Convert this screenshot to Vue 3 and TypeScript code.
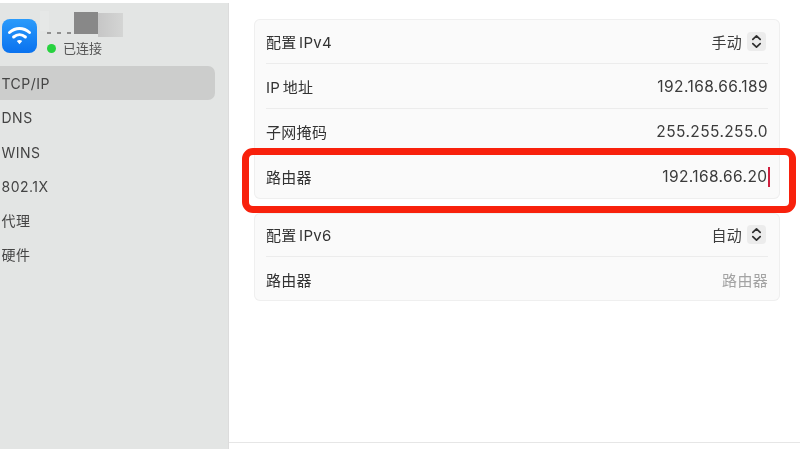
<template>
  <div class="window">
    <aside class="side">
      <div class="net">
        <div class="net__icon">
          <svg width="35" height="35" viewBox="0 0 35 35" fill="none">
            <path d="M7.5 13.5c6-5.4 14-5.4 20 0" stroke="#fff" stroke-width="3" stroke-linecap="round" />
            <path d="M11.6 18c3.6-3 8.2-3 11.8 0" stroke="#fff" stroke-width="3" stroke-linecap="round" />
            <path d="M14.8 22l2.7 3.2 2.7-3.2c-1.6-1.2-3.8-1.2-5.4 0z" fill="#fff" />
          </svg>
        </div>
        <div class="net__text">
          <div class="net__name">
            <i class="mask mask--pale"></i>
            <i class="mask mask--dots"></i>
            <i class="mask mask--dark"></i>
            <i class="mask mask--light"></i>
          </div>
          <div class="net__status"><i class="dot"></i>已连接</div>
        </div>
      </div>
      <nav class="nav">
        <div v-for="item in navItems" :key="item" class="nav__item" :class="{ 'nav__item--on': item === 'TCP/IP' }">
          {{ item }}
        </div>
      </nav>
    </aside>
    <main class="main">
      <section class="card">
        <div v-for="row in rows" :key="row.label" class="row">
          <span class="row__label">{{ row.label }}</span>
          <span class="row__val" :class="{ 'row__val--ip': !row.select }">
            {{ row.value }}
            <i v-if="row.caret" class="caret"></i>
            <span v-if="row.select" class="stepper">
              <svg width="11" height="15" viewBox="0 0 11 15" fill="none" stroke="#2e2e2e" stroke-width="1.7" stroke-linecap="round" stroke-linejoin="round">
                <path d="M1.8 5.4L5.5 1.8l3.7 3.6" />
                <path d="M1.8 9.6l3.7 3.6 3.7-3.6" />
              </svg>
            </span>
          </span>
        </div>
      </section>
      <section class="card card--second">
        <div v-for="row in rows2" :key="row.label" class="row">
          <span class="row__label">{{ row.label }}</span>
          <span class="row__val" :class="{ 'row__val--hint': row.hint }">
            {{ row.value }}
            <span v-if="row.select" class="stepper">
              <svg width="11" height="15" viewBox="0 0 11 15" fill="none" stroke="#2e2e2e" stroke-width="1.7" stroke-linecap="round" stroke-linejoin="round">
                <path d="M1.8 5.4L5.5 1.8l3.7 3.6" />
                <path d="M1.8 9.6l3.7 3.6 3.7-3.6" />
              </svg>
            </span>
          </span>
        </div>
      </section>
      <div class="highlight"></div>
      <div class="foot"></div>
    </main>
  </div>
</template>

<script setup lang="ts">
interface Row {
  label: string
  value: string
  select?: boolean
  caret?: boolean
  hint?: boolean
}

const navItems = ['TCP/IP', 'DNS', 'WINS', '802.1X', '代理', '硬件']

const rows: Row[] = [
  { label: '配置 IPv4', value: '手动', select: true },
  { label: 'IP 地址', value: '192.168.66.189' },
  { label: '子网掩码', value: '255.255.255.0' },
  { label: '路由器', value: '192.168.66.20', caret: true },
]

const rows2: Row[] = [
  { label: '配置 IPv6', value: '自动', select: true },
  { label: '路由器', value: '路由器', hint: true },
]
</script>

<style>
html,
body {
  margin: 0;
  background: #fff;
}
</style>

<style scoped>
.window {
  display: flex;
  width: 800px;
  height: 449px;
  overflow: hidden;
  font-family: Inter, "Noto Sans CJK SC", sans-serif;
  color: #3a3a3a;
  background: #fff;
  filter: blur(0.35px);
}
.side {
  box-sizing: border-box;
  width: 229px;
  margin-top: 3px;
  background: #e3e5e4;
  border-right: 1px solid #dcdcdc;
}
.net {
  position: relative;
  display: flex;
  gap: 10px;
  padding: 16px 0 0 2px;
  height: 47px;
}
.net__icon {
  display: flex;
  flex: none;
  width: 35px;
  height: 34px;
  border-radius: 8px;
  background: linear-gradient(#2b9bfb, #0a72ef);
}
.net__text {
  padding-top: 5px;
}
.net__name {
  height: 15px;
}
.mask {
  position: absolute;
}
.mask--pale {
  left: 40px;
  top: 8px;
  width: 9px;
  height: 20px;
  background: #e6e8e7;
}
.mask--dots {
  left: 47px;
  top: 29px;
  width: 27px;
  height: 2px;
  background: repeating-linear-gradient(90deg, #8f8f8f 0 4px, transparent 4px 10px);
}
.mask--dark {
  left: 74px;
  top: 9px;
  width: 24px;
  height: 22px;
  background: #888;
}
.mask--light {
  left: 98px;
  top: 10px;
  width: 25px;
  height: 24px;
  background: linear-gradient(90deg, #c6c6c6, #d4d5d4);
}
.net__status {
  display: flex;
  align-items: center;
  gap: 7px;
  font-size: 13px;
  line-height: 18px;
  color: #555;
}
.dot {
  width: 9px;
  height: 9px;
  border-radius: 50%;
  background: #27d23f;
}
.nav {
  display: flex;
  flex-direction: column;
  gap: 0.3px;
}
.nav__item {
  width: 215px;
  height: 34px;
  padding-left: 1.5px;
  box-sizing: border-box;
  font-size: 14px;
  letter-spacing: 0.5px;
  line-height: 35px;
  color: #444;
}
.nav__item--on {
  background: #cccdcc;
  border-radius: 0 7px 7px 0;
}
.main {
  position: relative;
  flex: 1;
  padding: 19px 20px 0 25px;
}
.card {
  box-sizing: border-box;
  height: 180px;
  padding: 0 12px;
  background: #fafafa;
  box-shadow: inset 0 0 0 1px #efefef;
  border-radius: 6px;
}
.card--second {
  height: 88px;
  margin-top: 14px;
}
.row {
  display: flex;
  align-items: center;
  justify-content: space-between;
  height: 45px;
  box-sizing: border-box;
  font-size: 15px;
  letter-spacing: 0.3px;
  color: #333;
  border-bottom: 1px solid #ececec;
}
.card--second .row:first-child {
  height: 44px;
}
.row:last-child {
  border-bottom: none;
}
.row__label {
  word-spacing: -2px;
}
.row__val {
  display: flex;
  align-items: center;
  gap: 5px;
  color: #3c3c3c;
}
.row__val--ip {
  font-size: 15.5px;
  letter-spacing: 0.4px;
}
.row__val--hint {
  color: #a3a3a3;
}
.stepper {
  display: flex;
  align-items: center;
  justify-content: center;
  width: 19px;
  height: 19px;
  margin-right: 2px;
  border-radius: 4px;
  background: #ececec;
}
.caret {
  width: 2px;
  height: 20px;
  margin-left: -5px;
  margin-right: -1.5px;
  background: #cf1f3e;
}
.highlight {
  position: absolute;
  left: 13px;
  top: 148px;
  width: 554px;
  height: 65px;
  box-sizing: border-box;
  border: 7px solid #f8210c;
  border-radius: 11px;
}
.foot {
  position: absolute;
  left: 0;
  right: 0;
  top: 442px;
  height: 1px;
  background: #e6e6e6;
}
</style>
